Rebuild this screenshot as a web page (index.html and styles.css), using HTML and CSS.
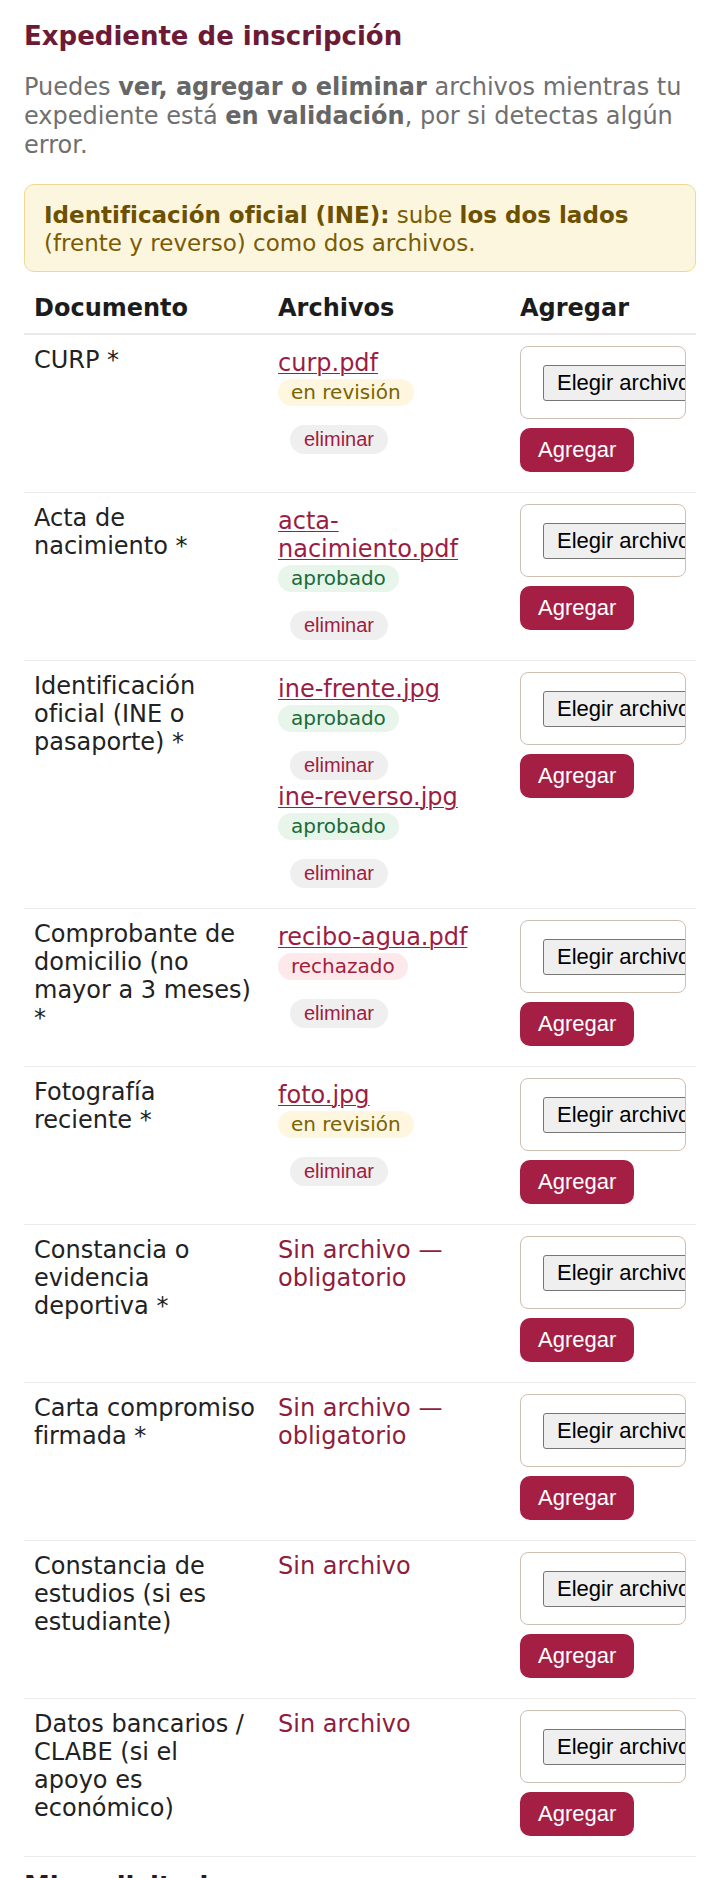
FILE: index.html
```html
<!DOCTYPE html>
<html lang="es">
<head>
<meta charset="utf-8">
<title>Expediente de inscripción</title>
<link rel="stylesheet" href="styles.css">
</head>
<body>
<main class="page">
  <h1 class="title">Expediente de inscripción</h1>
  <p class="intro">Puedes <strong>ver, agregar o eliminar</strong> archivos mientras tu expediente está <strong>en validación</strong>, por si detectas algún error.</p>
  <div class="notice"><strong>Identificación oficial (INE):</strong> sube <strong>los dos lados</strong> (frente y reverso) como dos archivos.</div>

  <table class="docs">
    <colgroup>
      <col class="col-doc">
      <col class="col-files">
      <col class="col-add">
    </colgroup>
    <thead>
      <tr><th>Documento</th><th>Archivos</th><th>Agregar</th></tr>
    </thead>
    <tbody>
      <tr>
        <td>CURP *</td>
        <td>
          <div class="file"><a class="fname" href="#">curp.pdf</a><span class="badge review">en revisión</span><button class="del" type="button">eliminar</button></div>
        </td>
        <td><div class="add"><div class="filebox"><span class="choose">Elegir archivo</span></div><button class="btn-add" type="button">Agregar</button></div></td>
      </tr>
      <tr>
        <td>Acta de nacimiento *</td>
        <td>
          <div class="file"><a class="fname" href="#">acta-nacimiento.pdf</a><span class="badge ok">aprobado</span><button class="del" type="button">eliminar</button></div>
        </td>
        <td><div class="add"><div class="filebox"><span class="choose">Elegir archivo</span></div><button class="btn-add" type="button">Agregar</button></div></td>
      </tr>
      <tr>
        <td>Identificación oficial (INE o pasaporte) *</td>
        <td>
          <div class="file"><a class="fname" href="#">ine-frente.jpg</a><span class="badge ok">aprobado</span><button class="del" type="button">eliminar</button></div>
          <div class="file"><a class="fname" href="#">ine-reverso.jpg</a><span class="badge ok">aprobado</span><button class="del" type="button">eliminar</button></div>
        </td>
        <td><div class="add"><div class="filebox"><span class="choose">Elegir archivo</span></div><button class="btn-add" type="button">Agregar</button></div></td>
      </tr>
      <tr>
        <td>Comprobante de domicilio (no mayor a 3 meses) *</td>
        <td>
          <div class="file"><a class="fname" href="#">recibo-agua.pdf</a><span class="badge bad">rechazado</span><button class="del" type="button">eliminar</button></div>
        </td>
        <td><div class="add"><div class="filebox"><span class="choose">Elegir archivo</span></div><button class="btn-add" type="button">Agregar</button></div></td>
      </tr>
      <tr>
        <td>Fotografía reciente *</td>
        <td>
          <div class="file"><a class="fname" href="#">foto.jpg</a><span class="badge review">en revisión</span><button class="del" type="button">eliminar</button></div>
        </td>
        <td><div class="add"><div class="filebox"><span class="choose">Elegir archivo</span></div><button class="btn-add" type="button">Agregar</button></div></td>
      </tr>
      <tr>
        <td>Constancia o evidencia deportiva *</td>
        <td><span class="missing">Sin archivo — obligatorio</span></td>
        <td><div class="add"><div class="filebox"><span class="choose">Elegir archivo</span></div><button class="btn-add" type="button">Agregar</button></div></td>
      </tr>
      <tr>
        <td>Carta compromiso firmada *</td>
        <td><span class="missing">Sin archivo — obligatorio</span></td>
        <td><div class="add"><div class="filebox"><span class="choose">Elegir archivo</span></div><button class="btn-add" type="button">Agregar</button></div></td>
      </tr>
      <tr>
        <td>Constancia de estudios (si es estudiante)</td>
        <td><span class="missing">Sin archivo</span></td>
        <td><div class="add"><div class="filebox"><span class="choose">Elegir archivo</span></div><button class="btn-add" type="button">Agregar</button></div></td>
      </tr>
      <tr>
        <td>Datos bancarios / CLABE (si el apoyo es económico)</td>
        <td><span class="missing">Sin archivo</span></td>
        <td><div class="add"><div class="filebox"><span class="choose">Elegir archivo</span></div><button class="btn-add" type="button">Agregar</button></div></td>
      </tr>
    </tbody>
  </table>

  <h2 class="subtitle">Mis solicitudes</h2>
</main>
</body>
</html>
```

FILE: styles.css
```css
html, body {
  margin: 0;
  padding: 0;
  background: #ffffff;
}

body {
  font-family: "DejaVu Sans", "Noto Sans", sans-serif;
  font-size: 24px;
  color: #1f1f1f;
}

.page {
  padding: 0 24px;
}

.title {
  margin: 21px 0 22px;
  font-size: 26px;
  font-weight: bold;
  line-height: normal;
  color: #6d1a36;
}

.intro {
  margin: 0 0 25px;
  font-size: 24px;
  line-height: 1.2;
  color: #707070;
}

.intro strong {
  color: #666666;
}

.notice {
  margin: 0 0 12px;
  padding: 17px 19px 13px;
  font-size: 0.96em;
  line-height: 1.2;
  color: #7a5c05;
  background: #fdf6de;
  border: 1px solid #eed993;
  border-radius: 10px;
}

.notice strong {
  color: #6e5100;
}

.docs {
  width: 100%;
  border-collapse: collapse;
  table-layout: fixed;
}

.col-doc { width: 244px; }
.col-files { width: 242px; }
.col-add { width: auto; }

.docs th {
  text-align: left;
  font-weight: bold;
  color: #1c1c1c;
  padding: 10px 10px 11px;
  line-height: normal;
  border-bottom: 2px solid #e9e9e9;
}

.docs td {
  vertical-align: top;
  padding: 11px 10px 20px;
  line-height: normal;
  color: #222222;
  border-bottom: 1px solid #ebebeb;
}

.file {
  padding-top: 3px;
}

.fname {
  display: block;
  color: #9c1d42;
  text-decoration: underline;
  text-underline-offset: 2px;
  text-decoration-thickness: 1px;
}

.badge {
  display: block;
  width: fit-content;
  margin-top: 2px;
  height: 27px;
  line-height: 27px;
  padding: 0 13px;
  font-size: 20px;
  border-radius: 14px;
}

.badge.review {
  background: #fff6e0;
  color: #7a6300;
}

.badge.ok {
  background: #e7f5ea;
  color: #1b6a38;
}

.badge.bad {
  background: #fde9ec;
  color: #a3203b;
}

.del {
  display: block;
  margin: 19px 0 0 12px;
  height: 29px;
  padding: 0 14px;
  border: 0;
  border-radius: 15px;
  background: #efefef;
  color: #a01c40;
  font-family: "Liberation Sans", Arial, sans-serif;
  font-size: 20px;
  line-height: 29px;
}

.missing {
  color: #8f1d3b;
}

.add {
  display: flex;
  flex-direction: column;
  align-items: flex-start;
  gap: 9px;
}

.filebox {
  box-sizing: border-box;
  width: 166px;
  height: 73px;
  padding: 18px 0 0 22px;
  border: 1px solid #cdbfb2;
  border-radius: 8px;
  background: #ffffff;
  overflow: hidden;
  white-space: nowrap;
}

.choose {
  display: inline-block;
  box-sizing: border-box;
  height: 36px;
  line-height: 34px;
  padding: 0 13px;
  border: 1px solid #767676;
  border-radius: 3px;
  background: #efefef;
  color: #000000;
  font-family: "Liberation Sans", Arial, sans-serif;
  font-size: 22px;
}

.btn-add {
  height: 44px;
  padding: 0 18px;
  border: 0;
  border-radius: 10px;
  background: #a51f45;
  color: #ffffff;
  font-family: "Liberation Sans", Arial, sans-serif;
  font-size: 22px;
  line-height: 44px;
}

.subtitle {
  margin: 14px 0 20px;
  font-size: 26px;
  font-weight: bold;
  line-height: normal;
  color: #2a1a1f;
}
```
